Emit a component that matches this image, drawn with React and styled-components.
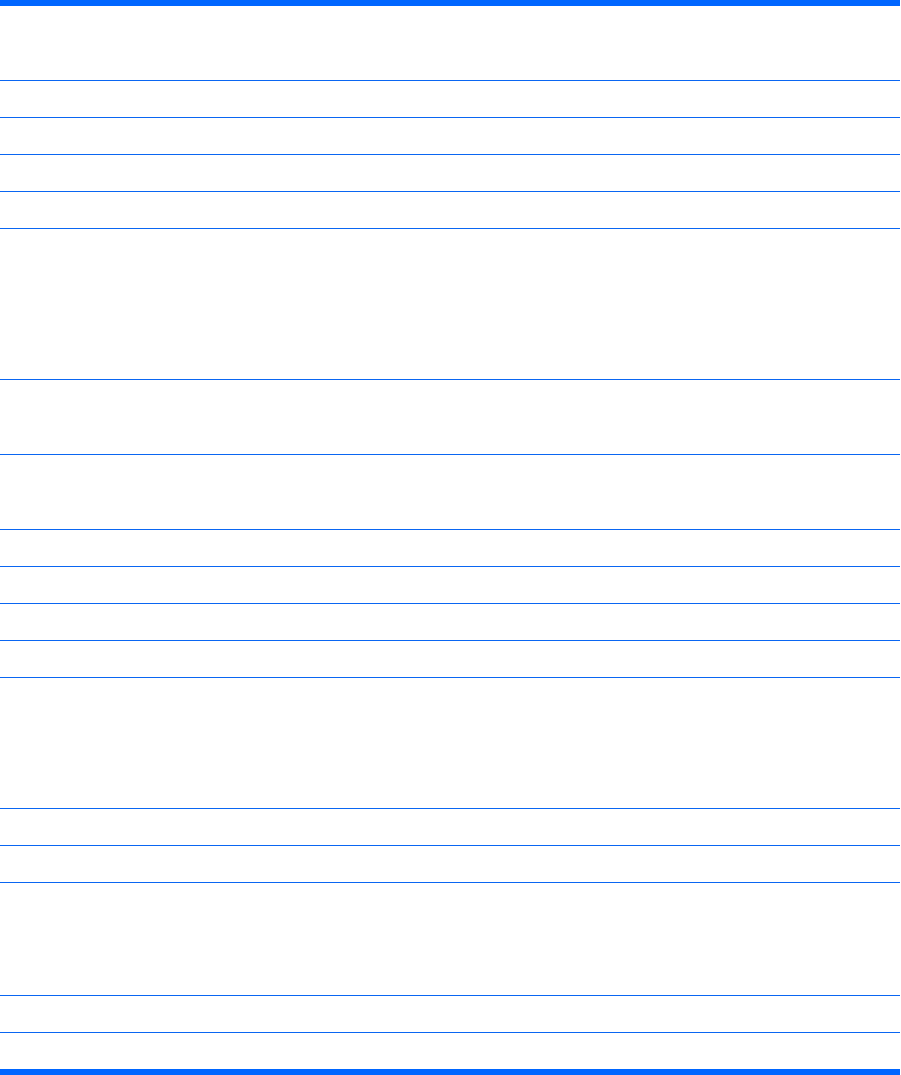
import React from "react";
import styled, { createGlobalStyle } from "styled-components";

const Global = createGlobalStyle`
  html, body { margin: 0; padding: 0; background: #ffffff; }
  body { font-family: "Liberation Sans", Arial, sans-serif; }
`;

const Table = styled.div`
  width: 900px;
  border-top: 6px solid #0066ff;
  border-bottom: 6px solid #0066ff;
  display: flex;
  flex-direction: column;
`;

const Row = styled.div`
  display: grid;
  grid-template-columns: 367px 308px 225px;
  height: ${(p) => p.$h}px;
`;

const Cell = styled.div`
  border-bottom: ${(p) => (p.$last ? "none" : "1px solid #0a66f2")};
  box-sizing: border-box;
  font-size: 12px;
  color: #000;
`;

const heights = [74, 36, 36, 36, 36, 150, 74, 74, 36, 36, 36, 36, 130, 36, 36, 112, 36, 36];

export default function App() {
  return (
    <>
      <Global />
      <Table>
        {heights.map((h, i) => {
          const last = i === heights.length - 1;
          return (
            <Row key={i} $h={last ? h : h + 1}>
              <Cell $last={last} />
              <Cell $last={last} />
              <Cell $last={last} />
            </Row>
          );
        })}
      </Table>
    </>
  );
}
